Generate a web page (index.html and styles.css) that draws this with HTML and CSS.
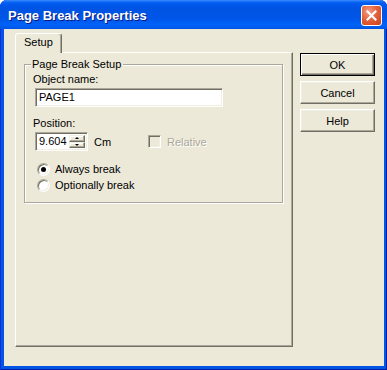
FILE: index.html
```html
<!DOCTYPE html>
<html lang="en">
<head>
  <meta charset="UTF-8">
  <title>Page Break Properties</title>
  <link rel="stylesheet" href="styles.css">
</head>
<body>
  <div class="window">
    <div class="titlebar">
      <span class="title">Page Break Properties</span>
      <span class="close">
        <svg width="11" height="11" viewBox="0 0 11 11">
          <path d="M1.5 1.5 L9.5 9.5 M9.5 1.5 L1.5 9.5" stroke="#fff" stroke-width="2.2" stroke-linecap="square"/>
        </svg>
      </span>
    </div>

    <div class="client">
      <!-- tab control -->
      <div class="tabs">
        <div class="tab-strip">
          <div class="tab">Setup</div>
        </div>
        <div class="panel">
          <div class="group">
            <span class="group-title">Page Break Setup</span>
            <div class="label">Object name:</div>
            <div class="textbox">PAGE1</div>
            <div class="label pos-label">Position:</div>
            <div class="pos-row">
              <div class="spinner">
                <span class="spin-value">9.604</span>
                <span class="spin-btns">
                  <span class="spin-btn"><span class="arrow-up"></span></span>
                  <span class="spin-btn"><span class="arrow-down"></span></span>
                </span>
              </div>
              <span class="unit">Cm</span>
              <span class="check disabled"><span class="check-box"></span>Relative</span>
            </div>
            <div class="radios">
              <div class="radio checked"><span class="radio-dot"></span>Always break</div>
              <div class="radio"><span class="radio-dot"></span>Optionally break</div>
            </div>
          </div>
        </div>
      </div>

      <!-- dialog buttons -->
      <div class="buttons">
        <div class="btn default">OK</div>
        <div class="btn">Cancel</div>
        <div class="btn">Help</div>
      </div>
    </div>
  </div>
</body>
</html>
```

FILE: styles.css
```css
/* page */
body {
  margin: 0;
  background: #fff;
  font-family: "Liberation Sans", Arial, sans-serif;
  font-size: 11px;
  color: #000;
}

/* window frame */
.window {
  width: 387px;
  height: 370px;
  display: flex;
  flex-direction: column;
  background: #0353e6;
  border-radius: 7px 7px 0 0;
  overflow: hidden;
  box-sizing: border-box;
  box-shadow: inset 1px 0 #0831d9, inset -1px 0 #001ea0, inset 0 -1px #001ea0;
}

.titlebar {
  height: 29px;
  flex: none;
  display: flex;
  align-items: center;
  padding: 0 5px 0 8px;
  box-sizing: border-box;
  background: linear-gradient(to bottom, #3d8dfd 0, #0a66f4 2px, #0058ee 4px, #0054e3 9px, #0055e8 18px, #0062f7 25px, #0058ea 28px, #0050dc 29px);
}
.title {
  flex: 1;
  color: #fff;
  font-weight: bold;
  font-size: 13px;
  text-shadow: 1px 1px #0a1883;
  padding-top: 1px;
}
.close {
  width: 21px;
  height: 21px;
  box-sizing: border-box;
  border: 1px solid #fff;
  border-radius: 3px;
  background: radial-gradient(circle at 35% 30%, #f2a08a 0, #e5623c 45%, #c8401c 100%);
  display: flex;
  align-items: center;
  justify-content: center;
  margin-top: 1px;
}

/* client area */
.client {
  flex: 1;
  display: flex;
  gap: 7px;
  background: #ece9d8;
  margin: 0 3px 4px 4px;
  padding: 4px 0 0 11px;
}

/* tab control */
.tabs {
  width: 278px;
  display: flex;
  flex-direction: column;
}
.tab-strip {
  height: 19px;
  display: flex;
}
.tab {
  position: relative;
  z-index: 1;
  width: 47px;
  height: 20px;
  box-sizing: border-box;
  border-left: 1px solid #fff;
  border-top: 1px solid #fff;
  border-right: 1px solid #716f64;
  box-shadow: inset -1px 0 #aca899;
  border-radius: 3px 3px 0 0;
  background: #ece9d8;
  padding: 2px 0 0 8px;
  line-height: 13px;
}
.panel {
  height: 295px;
  box-sizing: border-box;
  border: 1px solid;
  border-color: #fff #716f64 #716f64 #fff;
  box-shadow: inset -1px -1px #aca899;
  padding: 11px 0 0 8px;
}

/* group box */
.group {
  position: relative;
  width: 259px;
  height: 139px;
  box-sizing: border-box;
  border: 1px solid #aca899;
  box-shadow: inset 1px 1px #fff, 1px 1px #fff;
  padding: 8px 0 0 8px;
}
.group-title {
  position: absolute;
  top: -7px;
  left: 6px;
  padding: 0 2px 0 1px;
  line-height: 13px;
  background: #ece9d8;
}
.label {
  line-height: 13px;
}
.pos-label {
  margin-top: 10px;
}

/* sunken fields */
.textbox,
.spinner {
  box-sizing: border-box;
  height: 19px;
  background: #fff;
  border: 1px solid;
  border-color: #aca899 #fff #fff #aca899;
  box-shadow: inset 1px 1px #716f64, inset -1px -1px #f1efe2;
}
.textbox {
  width: 188px;
  margin: 2px 0 0 2px;
  padding-left: 3px;
  line-height: 17px;
}

.pos-row {
  display: flex;
  align-items: center;
  margin-top: 2px;
}
.spinner {
  width: 53px;
  margin-left: 2px;
  display: flex;
  padding: 2px 2px 2px 0;
}
.spin-value {
  flex: 1;
  padding-left: 3px;
  line-height: 13px;
}
.spin-btns {
  width: 16px;
  display: flex;
  flex-direction: column;
}
.spin-btn {
  flex: 1;
  box-sizing: border-box;
  background: #ece9d8;
  border: 1px solid;
  border-color: #f1efe2 #716f64 #716f64 #f1efe2;
  box-shadow: inset -1px -1px #aca899, inset 1px 1px #fff;
  display: flex;
  align-items: center;
  justify-content: center;
}
.arrow-up,
.arrow-down {
  width: 0;
  height: 0;
  border-left: 2px solid transparent;
  border-right: 2px solid transparent;
}
.arrow-up {
  border-bottom: 2px solid #000;
}
.arrow-down {
  border-top: 2px solid #000;
}
.unit {
  width: 54px;
  margin-left: 6px;
}

/* check box */
.check {
  display: flex;
  align-items: center;
}
.check-box {
  width: 13px;
  height: 13px;
  box-sizing: border-box;
  margin-right: 6px;
  border: 1px solid;
  border-color: #aca899 #fff #fff #aca899;
  box-shadow: inset 1px 1px #716f64, inset -1px -1px #f1efe2;
}
.check.disabled {
  color: #aca899;
  text-shadow: 1px 1px #fff;
}

/* radio buttons */
.radios {
  margin-top: 10px;
}
.radio {
  height: 16px;
  display: flex;
  align-items: center;
  margin-left: 4px;
}
.radio-dot {
  position: relative;
  width: 13px;
  height: 13px;
  box-sizing: border-box;
  margin-right: 5px;
  border-radius: 50%;
  background: #fff;
  border: 1px solid;
  border-color: #aca899 #fff #fff #aca899;
  box-shadow: inset 1px 1px #716f64, inset -1px -1px #f1efe2;
}
.radio.checked .radio-dot::after {
  content: "";
  position: absolute;
  left: 3px;
  top: 3px;
  width: 5px;
  height: 5px;
  border-radius: 50%;
  background: #000;
}

/* dialog buttons */
.buttons {
  margin-top: 20px;
  display: flex;
  flex-direction: column;
  gap: 5px;
}
.btn {
  width: 75px;
  height: 23px;
  box-sizing: border-box;
  display: flex;
  align-items: center;
  justify-content: center;
  border: 1px solid;
  border-color: #fff #716f64 #716f64 #fff;
  box-shadow: inset -1px -1px #aca899, inset 1px 1px #f1efe2;
}
.btn.default {
  border-color: #000;
  box-shadow: inset 1px 1px #fff, inset -1px -1px #716f64, inset -2px -2px #aca899;
}
```
